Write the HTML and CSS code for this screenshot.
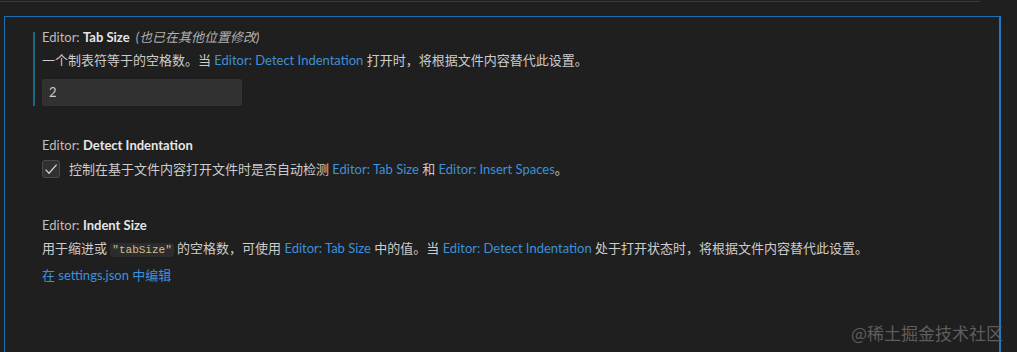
FILE: index.html
```html
<!DOCTYPE html>
<html lang="zh-CN">
<head>
<meta charset="utf-8">
<title>Settings</title>
<link rel="stylesheet" href="styles.css">
</head>
<body>
<div class="topline"></div>
<div class="panel">
  <div class="item focused">
    <div class="title"><span class="cat">Editor: </span><span class="name">Tab Size</span><span class="modified">(也已在其他位置修改)</span></div>
    <div class="desc">一个制表符等于的空格数。当 <a class="link">Editor: Detect Indentation</a> 打开时，将根据文件内容替代此设置。</div>
    <div class="input">2</div>
  </div>
  <div class="item item2">
    <div class="title"><span class="cat">Editor: </span><span class="name">Detect Indentation</span></div>
    <div class="checkrow">
      <span class="checkbox"><svg width="16" height="16" viewBox="0 0 16 16"><path d="M2.6 8.6 L6 12.2 L13.6 3.6" fill="none" stroke="#d4d4d4" stroke-width="1.3"/></svg></span>
      <span class="desc-inline">控制在基于文件内容打开文件时是否自动检测 <a class="link">Editor: Tab Size</a> 和 <a class="link">Editor: Insert Spaces</a>。</span>
    </div>
  </div>
  <div class="item item3">
    <div class="title"><span class="cat">Editor: </span><span class="name">Indent Size</span></div>
    <div class="desc">用于缩进或 <code class="code">"tabSize"</code> 的空格数，可使用 <a class="link">Editor: Tab Size</a> 中的值。当 <a class="link">Editor: Detect Indentation</a> 处于打开状态时，将根据文件内容替代此设置。</div>
    <div class="editlink"><a class="link">在 settings.json 中编辑</a></div>
  </div>
</div>
<div class="watermark">@稀土掘金技术社区</div>
</body>
</html>
```

FILE: styles.css
```css
html, body {
  margin: 0;
  padding: 0;
  background: #1f1f1f;
  height: 352px;
  overflow: hidden;
}
body {
  font-family: "Lato", "Noto Sans CJK SC", sans-serif;
  font-size: 13px;
  line-height: 18px;
  color: #cccccc;
  position: relative;
}
.topline {
  margin-top: 1px;
  width: 980px;
  height: 1px;
  background: #3a3a3a;
}
.panel {
  margin-top: 14px;
  margin-left: 4px;
  width: 997px;
  height: 336px;
  border: 1px solid #1f6fb5;
  border-right: 2px solid #1f78c8;
  border-bottom: none;
  padding: 11px 0 0 37px;
  box-sizing: border-box;
}
.item {
  position: relative;
}
.focused::before {
  content: "";
  position: absolute;
  left: -9px;
  top: 4px;
  bottom: 0;
  width: 2px;
  background: #1a6a85;
}
.title {
  color: #bdbdbd;
}
.name {
  color: #e6e6e6;
  font-weight: 700;
}
.modified {
  font-style: italic;
  color: #b0b0b0;
  margin-left: 6px;
}
.desc {
  margin-top: 5px;
  color: #cccccc;
}
.link {
  color: #3c91dc;
  text-decoration: none;
}
.input {
  margin-top: 10px;
  width: 200px;
  height: 27px;
  box-sizing: border-box;
  background: #313131;
  border: 1px solid #333333;
  border-radius: 2px;
  padding-left: 6px;
  line-height: 25px;
  color: #cccccc;
}
.item2 {
  margin-top: 30px;
}
.checkrow {
  margin-top: 6px;
  display: flex;
  align-items: center;
  gap: 9px;
}
.checkbox {
  width: 18px;
  height: 18px;
  box-sizing: border-box;
  background: #313131;
  border: 1px solid #4a4a4a;
  border-radius: 3px;
  display: flex;
  align-items: center;
  justify-content: center;
}
.item3 {
  margin-top: 38px;
}
.code {
  font-family: "Liberation Mono", monospace;
  font-size: 11px;
  color: #d2bf8a;
  background: #2c2c2c;
  border-radius: 3px;
  padding: 1px 2px;
}
.editlink {
  margin-top: 7px;
}
.watermark {
  position: absolute;
  right: 14px;
  top: 321px;
  font-size: 17px;
  color: #5e5e5e;
  font-family: "Noto Sans CJK SC", sans-serif;
  line-height: 24px;
}
```
